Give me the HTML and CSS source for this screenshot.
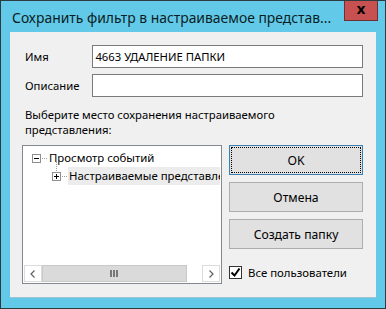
FILE: index.html
```html
<!DOCTYPE html>
<html>
<head>
  <meta charset="utf-8">
  <title>Сохранить фильтр</title>
  <link rel="stylesheet" href="styles.css">
</head>
<body>
<div class="window">
  <div class="titlebar">
    <span class="title">Сохранить фильтр в настраиваемое представ...</span>
    <span class="close">x</span>
  </div>
  <div class="client">
    <div class="row">
      <label class="lbl">Имя</label>
      <div class="field">4663 УДАЛЕНИЕ ПАПКИ</div>
    </div>
    <div class="row">
      <label class="lbl">Описание</label>
      <div class="field"></div>
    </div>
    <div class="hint">
      <div>Выберите место сохранения настраиваемого</div>
      <div>представления:</div>
    </div>
    <div class="lower">
      <div class="tree">
        <div class="tree-items">
          <div class="node root">
            <svg class="exp" width="9" height="9" viewBox="0 0 9 9"><rect x="0.5" y="0.5" width="8" height="8" fill="#fff" stroke="#8e8f8f"/><path d="M2 4.5h5" stroke="#000"/></svg>
            <span class="dots"></span>
            <span class="txt">Просмотр событий</span>
          </div>
          <div class="node child">
            <span class="vdots"></span>
            <svg class="exp" width="9" height="9" viewBox="0 0 9 9"><rect x="0.5" y="0.5" width="8" height="8" fill="#fff" stroke="#8e8f8f"/><path d="M2 4.5h5M4.5 2v5" stroke="#000"/></svg>
            <span class="dots"></span>
            <span class="txt sel">Настраиваемые представле</span>
          </div>
        </div>
        <div class="hscroll">
          <span class="arrow">
            <svg width="8" height="10" viewBox="0 0 8 10"><path d="M5.5 1.5L2 5l3.5 3.5" fill="none" stroke="#606060" stroke-width="1.2"/></svg>
          </span>
          <span class="thumb">
            <svg width="9" height="7" viewBox="0 0 9 7"><path d="M1 0v7M4 0v7M7 0v7" stroke="#606060" stroke-width="1.6"/></svg>
          </span>
          <span class="track"></span>
          <span class="arrow">
            <svg width="8" height="10" viewBox="0 0 8 10"><path d="M2.5 1.5L6 5 2.5 8.5" fill="none" stroke="#606060" stroke-width="1.2"/></svg>
          </span>
        </div>
      </div>
      <div class="buttons">
        <button class="btn default"><span class="focus">OK</span></button>
        <button class="btn">Отмена</button>
        <button class="btn">Создать папку</button>
        <label class="check">
          <span class="box">
            <svg width="11" height="11" viewBox="0 0 11 11"><path d="M1.5 5.5l3 3 5-7" fill="none" stroke="#000" stroke-width="2"/></svg>
          </span>
          Все пользователи
        </label>
      </div>
    </div>
  </div>
</div>
</body>
</html>
```

FILE: styles.css
```css
html, body {margin: 0; padding: 0;}
body {font-family: "Noto Sans", "DejaVu Sans", sans-serif; font-size: 11.3px; color: #000;}

.window {
  width: 384px; height: 307px;
  border: 1px solid #2d3a40;
  background: #62cae8;
  display: flex; flex-direction: column;
}

.titlebar {height: 31px; display: flex; align-items: flex-start; justify-content: space-between;}
.title {font-size: 13.9px; margin: 7px 0 0 11px; color: #0b1d24; white-space: nowrap;}
.close {
  width: 32px; height: 19px; margin-right: 7px;
  background: #c75050; border: 1px solid #6d3030; border-top: none;
  color: #000; font: bold 14px/17px "DejaVu Sans", sans-serif; text-align: center;
}

.client {
  margin: 0 9px; height: 266px;
  background: #f0f0f0;
  border-bottom: 1px solid #9fc3d2;
  padding: 13px 13px 0 12px;
  box-sizing: border-box;
}

.row {display: flex; align-items: center; margin-bottom: 6px;}
.lbl {width: 68px; padding-left: 3px;}
.field {
  height: 21px; line-height: 21px; width: 269px;
  border: 1px solid #7a7a7a; background: #fff;
  padding-left: 2px; white-space: nowrap;
}

.hint {margin: 10px 0 0 3px; line-height: 15px;}

.lower {display: flex; gap: 7px; margin-top: 8px;}

.tree {
  width: 196px; height: 135px;
  border: 1px solid #828790; background: #fff;
  display: flex; flex-direction: column;
  padding: 1px;
}
.tree-items {flex: 1;}
.node {display: flex; align-items: center; height: 18px; position: relative; font-size: 11.4px;}
.root {margin-top: 2px; padding-left: 8px;}
.child {padding-left: 28px;}
.exp {flex: none;}
.dots {width: 5px; height: 0; border-top: 1px dotted #a0a0a0; margin: 0 1px;}
.vdots {position: absolute; left: 32px; top: -5px; height: 9px; border-left: 1px dotted #a0a0a0;}
.txt {padding: 0 1px; line-height: 18px; white-space: nowrap;}
.sel {background: #ececec; flex: 1; overflow: hidden;}

.hscroll {display: flex; height: 17px; border-top: 1px solid #fff;}
.arrow {width: 16px; display: flex; align-items: center; justify-content: center; background: #fff; border: 1px solid #dcdcdc;}
.thumb {width: 143px; background: #dadada; border: 1px solid #c8c8c8; display: flex; align-items: center; justify-content: center;}
.track {flex: 1; background: #fff;}

.buttons {display: flex; flex-direction: column; gap: 7px; width: 134px;}
.btn {
  height: 30px; width: 134px;
  font: 12.2px "Noto Sans", "DejaVu Sans", sans-serif;
  background: #e1e1e1; border: 1px solid #adadad;
  padding: 0; color: #000;
}
.btn.default {border-color: #3c7fb1; padding: 1px;}
.focus {display: flex; align-items: center; justify-content: center; height: 100%; border: 1px dotted #000; box-sizing: border-box;}

.check {display: flex; align-items: center; gap: 6px; margin-top: 9px; font-size: 11.4px;}
.box {width: 11px; height: 11px; border: 1px solid #333; background: #fff; display: flex;}
```
